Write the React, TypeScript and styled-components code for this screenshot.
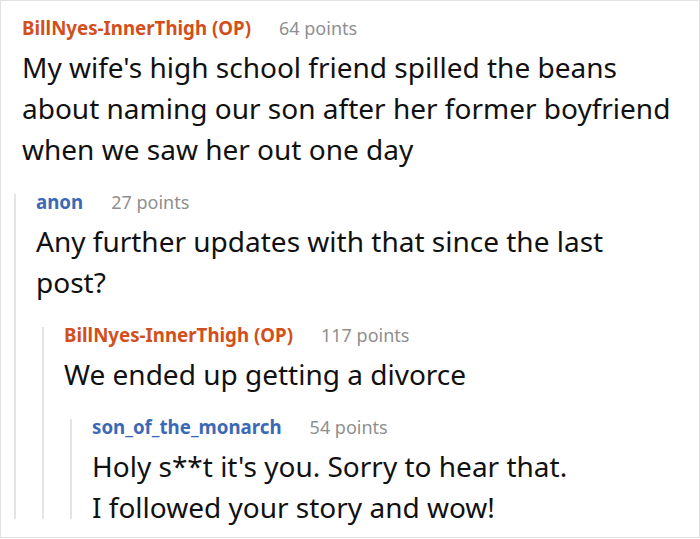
import React from "react";
import styled, { createGlobalStyle } from "styled-components";

const GlobalStyle = createGlobalStyle`
  html, body {
    margin: 0;
    padding: 0;
    background: #fff;
  }
  body {
    font-family: "Noto Sans", "Open Sans", sans-serif;
  }
`;

type CommentData = {
  author: string;
  op?: boolean;
  points: number;
  text: string[];
  replies?: CommentData[];
};

const thread: CommentData = {
  author: "BillNyes-InnerThigh (OP)",
  op: true,
  points: 64,
  text: [
    "My wife's high school friend spilled the beans",
    "about naming our son after her former boyfriend",
    "when we saw her out one day",
  ],
  replies: [
    {
      author: "anon",
      points: 27,
      text: ["Any further updates with that since the last", "post?"],
      replies: [
        {
          author: "BillNyes-InnerThigh (OP)",
          op: true,
          points: 117,
          text: ["We ended up getting a divorce"],
          replies: [
            {
              author: "son_of_the_monarch",
              points: 54,
              text: ["Holy s**t it's you. Sorry to hear that.", "I followed your story and wow!"],
            },
          ],
        },
      ],
    },
  ],
};

const Frame = styled.div`
  box-sizing: border-box;
  width: 700px;
  height: 538px;
  border: 1px solid #e2e2e2;
  padding: 19px 0 0 13px;
  overflow: hidden;
`;

const CommentBox = styled.div<{ $top?: boolean }>`
  display: flex;
  flex-direction: column;
  padding-left: ${({ $top }) => ($top ? "8px" : "0")};
`;

const Header = styled.div`
  display: flex;
  align-items: baseline;
  gap: 28px;
  font-size: 18px;
  line-height: 16px;
`;

const Author = styled.span<{ $op?: boolean }>`
  font-size: 18.7px;
  font-weight: 700;
  color: ${({ $op }) => ($op ? "#d24f1c" : "#3b69b5")};
`;

const Points = styled.span`
  color: #8f8f8f;
`;

/* the tall line box leaves air under the last line; pull the next block up */
const Body = styled.div`
  margin: 11px 0 -9px;
  font-size: 28px;
  line-height: 41px;
  color: #111;
`;

const Replies = styled.div<{ $top?: boolean }>`
  margin-top: 33px;
  margin-left: ${({ $top }) => ($top ? "-8px" : "6px")};
  border-left: 2px solid #e4e4e4;
  padding-left: 20px;
`;

function Comment({ data, top }: { data: CommentData; top?: boolean }) {
  return (
    <CommentBox $top={top}>
      <Header>
        <Author $op={data.op}>{data.author}</Author>
        <Points>{data.points} points</Points>
      </Header>
      <Body>
        {data.text.map((line) => (
          <div key={line}>{line}</div>
        ))}
      </Body>
      {data.replies && (
        <Replies $top={top}>
          {data.replies.map((r) => (
            <Comment key={r.author + r.points} data={r} />
          ))}
        </Replies>
      )}
    </CommentBox>
  );
}

export default function App() {
  return (
    <>
      <GlobalStyle />
      <Frame>
        <Comment data={thread} top />
      </Frame>
    </>
  );
}
